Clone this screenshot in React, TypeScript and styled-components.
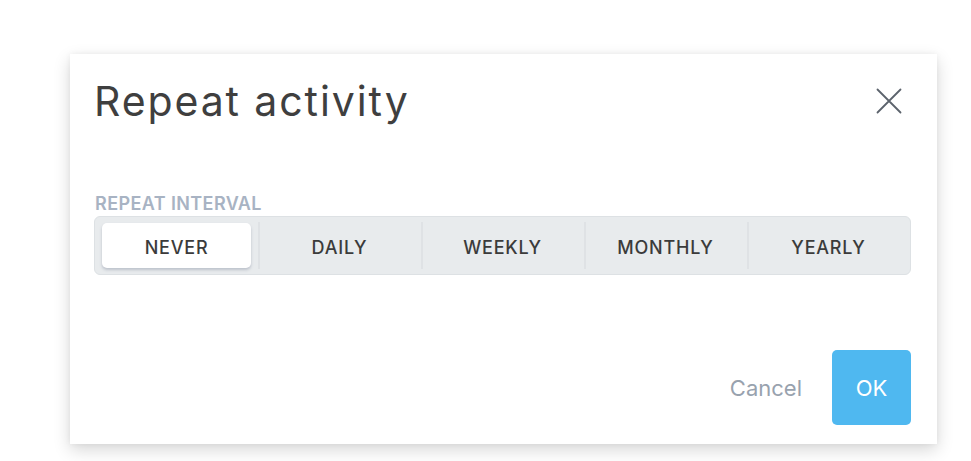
import React, { useState } from "react";
import styled, { createGlobalStyle } from "styled-components";

const Global = createGlobalStyle`
  html, body { margin: 0; padding: 0; background: #ffffff; }
  body { font-family: Inter, "Noto Sans", sans-serif; }
  * { box-sizing: border-box; }
`;

const Page = styled.div`
  width: 971px;
  height: 461px;
  padding: 54px 34px 0 70px;
`;

const Card = styled.div`
  width: 867px;
  height: 390px;
  background: #ffffff;
  box-shadow: 0 6px 16px rgba(0, 0, 0, 0.16), 0 0 6px rgba(0, 0, 0, 0.05);
  padding: 22px 26px 19px 24px;
  display: flex;
  flex-direction: column;
`;

const Header = styled.div`
  display: flex;
  align-items: center;
  justify-content: space-between;
  height: 50px;
`;

const Title = styled.h1`
  margin: 0;
  font-size: 41px;
  font-weight: 400;
  color: #3f3f3f;
  letter-spacing: 1.9px;
  line-height: 50px;
`;

const CloseButton = styled.button`
  border: none;
  background: none;
  padding: 0;
  width: 28px;
  height: 28px;
  margin-right: 8px;
  display: flex;
  align-items: center;
  justify-content: center;
  cursor: pointer;
`;

const Body = styled.div`
  margin-top: 67px;
  display: flex;
  flex-direction: column;
  gap: 1px;
`;

const Label = styled.div`
  font-size: 18px;
  font-weight: 600;
  color: #a8b3c3;
  letter-spacing: 0.4px;
  line-height: 22px;
  padding-left: 1px;
`;

const Segmented = styled.div`
  display: grid;
  grid-template-columns: repeat(5, 1fr);
  height: 59px;
  background: #e8ebed;
  border: 1px solid #dde1e4;
  border-radius: 6px;
`;

const Segment = styled.button<{ $divider: boolean }>`
  position: relative;
  border: none;
  background: transparent;
  padding: 6px 7px;
  font-family: inherit;
  cursor: pointer;
  display: flex;
  &::before {
    content: "";
    display: ${(p) => (p.$divider ? "block" : "none")};
    position: absolute;
    left: 0;
    top: 5px;
    bottom: 5px;
    width: 2px;
    background: #dfe2e5;
  }
`;

const SegmentInner = styled.span<{ $active: boolean }>`
  flex: 1;
  display: flex;
  align-items: center;
  justify-content: center;
  padding-top: 3px;
  border-radius: 5px;
  font-size: 18px;
  font-weight: 500;
  letter-spacing: 0.8px;
  color: #3b3b3b;
  background: ${(p) => (p.$active ? "#ffffff" : "transparent")};
  box-shadow: ${(p) =>
    p.$active ? "0 2px 3px rgba(80, 90, 120, 0.28)" : "none"};
`;

const Footer = styled.div`
  margin-top: auto;
  display: flex;
  justify-content: flex-end;
  align-items: center;
  gap: 30px;
`;

const CancelButton = styled.button`
  border: none;
  background: none;
  font-family: inherit;
  font-size: 22px;
  color: #98a2ae;
  padding: 0;
  cursor: pointer;
`;

const OkButton = styled.button`
  border: none;
  width: 79px;
  height: 75px;
  border-radius: 5px;
  background: #4fb8f0;
  color: #ffffff;
  font-family: inherit;
  font-size: 22px;
  cursor: pointer;
`;

const options = ["NEVER", "DAILY", "WEEKLY", "MONTHLY", "YEARLY"];

export default function App() {
  const [active, setActive] = useState(0);
  return (
    <>
      <Global />
      <Page>
        <Card>
          <Header>
            <Title>Repeat activity</Title>
            <CloseButton aria-label="Close">
              <svg width="26" height="26" viewBox="0 0 26 26">
                <path
                  d="M1.5 1.5 L24.5 24.5 M24.5 1.5 L1.5 24.5"
                  stroke="#5c636c"
                  strokeWidth="1.8"
                  strokeLinecap="round"
                  fill="none"
                />
              </svg>
            </CloseButton>
          </Header>
          <Body>
            <Label>REPEAT INTERVAL</Label>
            <Segmented>
              {options.map((o, i) => (
                <Segment key={o} $divider={i > 0} onClick={() => setActive(i)}>
                  <SegmentInner $active={i === active}>{o}</SegmentInner>
                </Segment>
              ))}
            </Segmented>
          </Body>
          <Footer>
            <CancelButton>Cancel</CancelButton>
            <OkButton>OK</OkButton>
          </Footer>
        </Card>
      </Page>
    </>
  );
}
